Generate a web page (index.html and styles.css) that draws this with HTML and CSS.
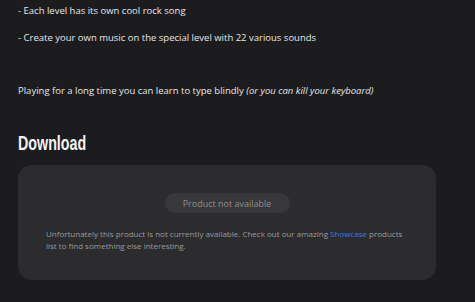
FILE: index.html
```html
<!DOCTYPE html>
<html lang="en">
<head>
    <meta charset="UTF-8">
    <meta name="viewport" content="width=device-width, initial-scale=1.0">
    <title>Keyboard Rock - Game</title>
    <link rel="stylesheet" href="styles.css">
</head>
<body>
    <div class="content">
        <div class="features">
            <p>- Each level has its own cool rock song</p>
            <p>- Create your own music on the special level with 22 various sounds</p>
        </div>

        <p class="note">Playing for a long time you can learn to type blindly <em>(or you can kill your keyboard)</em></p>

        <h2 class="section-title"><span>Download</span></h2>

        <div class="download-card">
            <button class="unavailable-button" disabled>Product not available</button>
            <p class="card-text">
                Unfortunately this product is not currently available. Check out our amazing
                <a href="#" class="link">Showcase</a> products list to find something else interesting.
            </p>
        </div>
    </div>
</body>
</html>
```

FILE: styles.css
```css
* {
    margin: 0;
    padding: 0;
    box-sizing: border-box;
}

body, html {
    width: 100%;
    height: 100%;
    background: #1c1c1e;
    color: #e6e6e8;
    font-family: 'Open Sans', sans-serif;
}

.content {
    padding: 4px 39px 0 18px;
}

.features {
    display: flex;
    flex-direction: column;
    gap: 14px;
}

.features p,
.note {
    font-size: 9.5px;
    line-height: 13px;
}

.note {
    margin-top: 40px;
}

.note em {
    font-style: italic;
}

.section-title {
    margin-top: 34px;
    font-family: 'Liberation Sans', Arial, sans-serif;
    font-weight: bold;
    font-size: 21px;
    line-height: 24px;
    color: #f2f2f4;
}

/* condensed look of the original display font */
.section-title span {
    display: inline-block;
    transform: scaleX(0.68);
    transform-origin: left center;
}

.download-card {
    margin-top: 10px;
    background: #2c2c2e;
    border-radius: 14px;
    padding: 28px 28px 28px;
    display: flex;
    flex-direction: column;
    align-items: center;
    gap: 15px;
}

.unavailable-button {
    background: #38383a;
    color: #8e8e92;
    border: none;
    border-radius: 10px;
    width: 125px;
    height: 20px;
    font-family: 'Open Sans', sans-serif;
    font-size: 9px;
}

.card-text {
    align-self: stretch;
    font-size: 8px;
    line-height: 12px;
    color: #9a9a9e;
}

.link {
    color: #2f7bf5;
    text-decoration: none;
}
```
